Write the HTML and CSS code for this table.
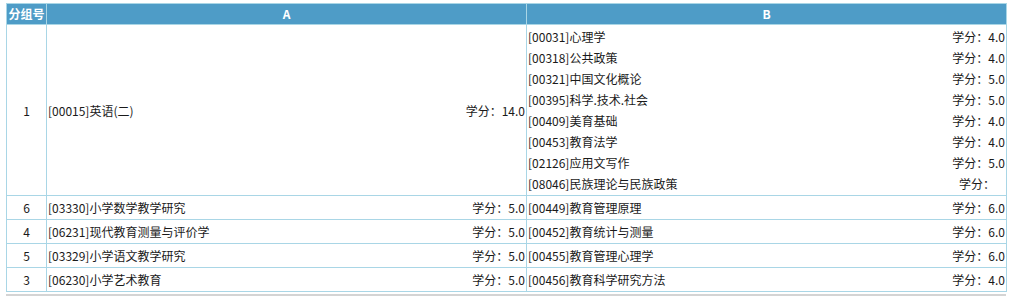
FILE: index.html
```html
<!DOCTYPE html>
<html lang="zh-CN">
<head>
<meta charset="utf-8">
<link rel="stylesheet" href="styles.css">
</head>
<body>
<div class="wrap">
<table class="grid">
  <colgroup><col class="c1"><col class="c2"><col class="c3"></colgroup>
  <thead>
    <tr><th>分组号</th><th>A</th><th>B</th></tr>
  </thead>
  <tbody>
    <tr>
      <td class="num">1</td>
      <td><div class="item"><span class="name">[00015]英语(二)</span><span class="credit">学分：14.0</span></div></td>
      <td>
        <div class="item"><span class="name">[00031]心理学</span><span class="credit">学分：4.0</span></div>
        <div class="item"><span class="name">[00318]公共政策</span><span class="credit">学分：4.0</span></div>
        <div class="item"><span class="name">[00321]中国文化概论</span><span class="credit">学分：5.0</span></div>
        <div class="item"><span class="name">[00395]科学.技术.社会</span><span class="credit">学分：5.0</span></div>
        <div class="item"><span class="name">[00409]美育基础</span><span class="credit">学分：4.0</span></div>
        <div class="item"><span class="name">[00453]教育法学</span><span class="credit">学分：4.0</span></div>
        <div class="item"><span class="name">[02126]应用文写作</span><span class="credit">学分：5.0</span></div>
        <div class="item"><span class="name">[08046]民族理论与民族政策</span><span class="credit blank">学分：</span></div>
      </td>
    </tr>
    <tr>
      <td class="num">6</td>
      <td><div class="item"><span class="name">[03330]小学数学教学研究</span><span class="credit">学分：5.0</span></div></td>
      <td><div class="item"><span class="name">[00449]教育管理原理</span><span class="credit">学分：6.0</span></div></td>
    </tr>
    <tr>
      <td class="num">4</td>
      <td><div class="item"><span class="name">[06231]现代教育测量与评价学</span><span class="credit">学分：5.0</span></div></td>
      <td><div class="item"><span class="name">[00452]教育统计与测量</span><span class="credit">学分：6.0</span></div></td>
    </tr>
    <tr>
      <td class="num">5</td>
      <td><div class="item"><span class="name">[03329]小学语文教学研究</span><span class="credit">学分：5.0</span></div></td>
      <td><div class="item"><span class="name">[00455]教育管理心理学</span><span class="credit">学分：6.0</span></div></td>
    </tr>
    <tr>
      <td class="num">3</td>
      <td><div class="item"><span class="name">[06230]小学艺术教育</span><span class="credit">学分：5.0</span></div></td>
      <td><div class="item"><span class="name">[00456]教育科学研究方法</span><span class="credit">学分：4.0</span></div></td>
    </tr>
  </tbody>
</table>
<div class="bar"></div>
</div>
</body>
</html>
```
FILE: styles.css
```css
html, body {
  margin: 0;
  padding: 0;
  background: #fff;
}
body {
  font-family: "Noto Sans CJK SC", "Noto Sans", sans-serif;
  font-size: 12px;
  color: #1a1a1a;
}
.wrap {
  padding: 3px 0 0 6px;
  width: 1000px;
}
.grid {
  border-collapse: collapse;
  table-layout: fixed;
  width: 1000px;
}
.c1 { width: 40px; }
.c2 { width: 480px; }
.c3 { width: 480px; }
.grid th, .grid td {
  border: 1px solid #a9d6e6;
  vertical-align: middle;
}
.grid th {
  background: #4e9cc7;
  color: #fff;
  font-weight: bold;
  height: 20px;
  line-height: 20px;
  text-align: center;
  padding: 0;
}
.grid td {
  padding: 1px 1px;
}
.num {
  text-align: center;
}
.item {
  display: flex;
  justify-content: space-between;
  height: 21px;
  line-height: 21px;
  white-space: nowrap;
}
.credit.blank {
  padding-right: 10px;
}
.bar {
  margin-top: 2px;
  height: 2px;
  background: #d4d4d4;
  width: 1000px;
}
```
